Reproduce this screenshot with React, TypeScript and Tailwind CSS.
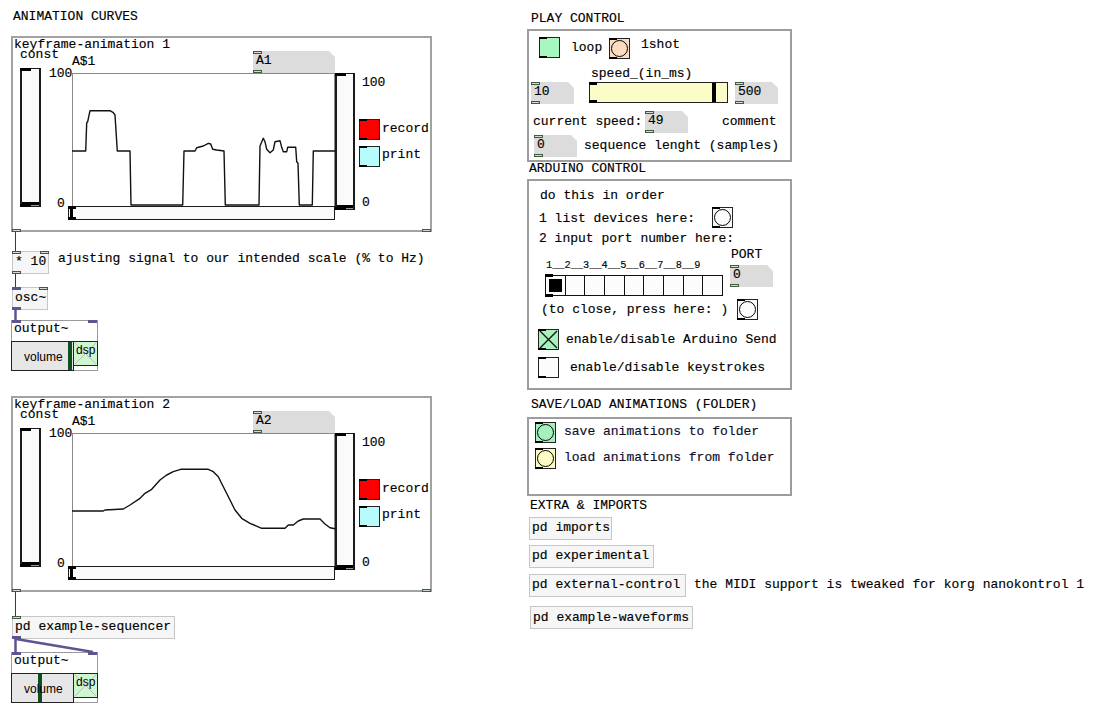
import React from "react";

type P = { c?: string; children?: React.ReactNode };

const T = ({ c = "", children }: P) => (
  <div className={`absolute whitespace-pre ${c}`}>{children}</div>
);

const Inlet = ({ c = "" }: P) => (
  <span className={`absolute h-[3px] w-[9px] border border-[#3f5a3f] bg-[#d2dcd2] ${c}`} />
);

const SigPort = ({ c = "" }: P) => (
  <span className={`absolute h-[3px] w-[9px] bg-[#5b5592] ${c}`} />
);

const Mark = ({ c = "" }: P) => <span className={`absolute h-[2px] w-[8px] bg-black ${c}`} />;

const NumBox = ({ c = "", children }: P) => (
  <div
    className={`absolute h-[22px] bg-[#dcdcdc] [clip-path:polygon(0_0,calc(100%_-_6px)_0,100%_6px,100%_100%,0_100%)] ${c}`}
  >
    <div className="absolute left-[3px] top-[1px]">{children}</div>
    <Inlet c="left-0 top-0" />
    <Inlet c="left-0 bottom-0" />
  </div>
);

const ObjBox = ({ c = "", children }: P) => (
  <div className={`absolute h-[23px] border border-[#c6c6c6] bg-[#f5f6f5] pl-[2px] pt-[1px] whitespace-pre ${c}`}>
    {children}
  </div>
);

const Toggle = ({ c = "", x = false }: P & { x?: boolean }) => (
  <div className={`absolute h-[21px] w-[21px] border border-[#222] ${c}`}>
    {x && (
      <svg className="absolute left-0 top-0" width="19" height="19" viewBox="0 0 19 19">
        <line x1="1" y1="1" x2="18" y2="18" stroke="#111" strokeWidth="1.2" />
        <line x1="18" y1="1" x2="1" y2="18" stroke="#111" strokeWidth="1.2" />
      </svg>
    )}
    <Mark c="-left-px -top-px" />
    <Mark c="-left-px -bottom-px" />
  </div>
);

const Bang = ({ c = "" }: P) => (
  <div className={`absolute h-[21px] w-[21px] border border-[#222] ${c}`}>
    <div className="absolute inset-[1px] rounded-full border border-black" />
    <Mark c="-left-px -top-px" />
    <Mark c="-left-px -bottom-px" />
  </div>
);

const VSlider = ({ c = "" }: P) => (
  <div className={`absolute border border-x-2 border-[#1a1a1a] bg-[#fafafa] ${c}`}>
    <span className="absolute -left-[2px] -top-px h-[3px] w-[11px] bg-black" />
    <span className="absolute inset-x-0 bottom-[1px] h-[3px] bg-black" />
    <span className="absolute inset-x-0 bottom-0 h-[1px] bg-[#9a9a9a]" />
    <span className="absolute -left-[2px] -bottom-px h-[3px] w-[11px] bg-black" />
  </div>
);

const HSlider = ({ c = "" }: P) => (
  <div className={`absolute border border-[#1a1a1a] bg-[#fafafa] ${c}`}>
    <span className="absolute left-[1px] inset-y-0 w-[3px] bg-black" />
    <span className="absolute -left-px -top-px h-[3px] w-[8px] bg-black" />
    <span className="absolute -left-px -bottom-px h-[3px] w-[8px] bg-black" />
  </div>
);

const curve1 =
  "0,78 13.7,78 14.7,49.7 15.7,48.7 18,37.7 38,37.7 41.3,39.7 43,42 45.3,78 58,78 59,132 110.7,132 112,78 123,78 124.7,74.7 131.3,73 136.3,70.3 138.7,71 140.7,76.3 144.7,77 152,78 153.3,132 187,132 188,73 191.3,65.3 193,68.7 194.7,76.3 198,79.7 201.3,77 203,68.7 208,67.7 209.7,74.3 211.3,78.7 214.7,78.7 215.7,74.3 223.7,74.3 224.7,88.7 226,90.3 227.3,132 240.3,132 241.3,78 263,78";

const curve2 =
  "0,78 31.3,78 33,77 51.3,76 58,72 68,65.3 73,60.3 79.7,56.3 88,47 94.7,42 101.3,38.7 108.7,36.3 136.3,36.3 141.3,38.7 146.3,43.7 151.3,53.7 158,67 163,77 169.7,85.3 178,90.3 189.7,95.3 213,95.3 216.3,92 221.3,92 226.3,88 231.3,86 248,86 253,91 258,94.7 263,95.7";

const KeyframeGOP = ({ c = "", title, num, curve }: { c?: string; title: string; num: string; curve: string }) => (
  <div className={`absolute h-[196px] w-[421px] ${c}`}>
    <div className="absolute inset-0 border-2 border-[#a2a2a2]" />
    <T c="left-[3px] top-[0px]">{title}</T>
    <T c="left-[9px] top-[10px]">const</T>
    <T c="left-[61px] top-[17px]">A$1</T>
    <div className="absolute left-[61px] top-[37px] h-[134px] w-[263px] border border-[#8a8a8a] bg-white">
      <svg className="absolute left-[-1px] top-[-1px] overflow-visible" width="263" height="134" viewBox="0 0 263 134">
        <polyline points={curve} fill="none" stroke="#111" strokeWidth="1.4" strokeLinejoin="round" />
      </svg>
    </div>
    <NumBox c="left-[242px] top-[15px] w-[82px]">{num}</NumBox>
    <VSlider c="left-[9px] top-[32px] h-[139px] w-[21px]" />
    <T c="left-[38px] top-[29px]">100</T>
    <T c="left-[46px] top-[159px]">0</T>
    <HSlider c="left-[57px] top-[170px] h-[14px] w-[267px]" />
    <VSlider c="left-[324px] top-[37px] h-[137px] w-[20px]" />
    <T c="left-[351px] top-[38px]">100</T>
    <T c="left-[351px] top-[158px]">0</T>
    <Toggle c="left-[348px] top-[83px] bg-[#fc0000]" />
    <T c="left-[371px] top-[84px]">record</T>
    <Toggle c="left-[348px] top-[110px] bg-[#b6fcfc]" />
    <T c="left-[371px] top-[110px]">print</T>
    <Inlet c="left-px bottom-0" />
    <Inlet c="right-px bottom-0" />
  </div>
);

const Output = ({ c = "", bar = "" }: { c?: string; bar?: string }) => (
  <div className={`absolute h-[51px] w-[87px] ${c}`}>
    <div className="absolute inset-0 border border-[#9a9a9a]" />
    <SigPort c="left-px top-0" />
    <SigPort c="right-px top-0" />
    <T c="left-[3px] top-0">output~</T>
    <div className="absolute left-0 top-[21px] h-[30px] w-[63px] border border-[#222] bg-[#e6e6e6] font-['Liberation_Sans',Arial,sans-serif] text-[12px] leading-[14px] [-webkit-text-stroke:0px]">
      <span className={`absolute inset-y-0 w-[4px] bg-[#0d5020] ${bar}`} />
      <span className="absolute left-[12px] top-[8px]">volume</span>
    </div>
    <div className="absolute left-[62px] top-[21px] h-[25px] w-[25px] border border-[#222] bg-[#cdf7cd] font-['Liberation_Sans',Arial,sans-serif] text-[12px] leading-[14px] [-webkit-text-stroke:0px]">
      <svg className="absolute left-0 top-0" width="23" height="23" viewBox="0 0 23 23">
        <line x1="1" y1="1" x2="22" y2="22" stroke="#bdbdbd" strokeWidth="1" />
        <line x1="22" y1="1" x2="1" y2="22" stroke="#bdbdbd" strokeWidth="1" />
      </svg>
      <span className="absolute left-[2px] top-[1px]">dsp</span>
    </div>
  </div>
);

export default function App() {
  return (
    <div className="relative h-[706px] w-[1095px] overflow-hidden bg-white font-['Liberation_Mono','Courier_New',monospace] text-[13px] leading-[18px] text-black [-webkit-text-stroke:0.15px_#000]">
      {/* LEFT COLUMN */}
      <T c="left-[13px] top-[8px]">ANIMATION CURVES</T>
      <KeyframeGOP c="left-[11px] top-[36px]" title="keyframe-animation 1" num="A1" curve={curve1} />

      <ObjBox c="left-[12px] top-[251px] w-[37px]">
        * 10
        <Inlet c="-left-px -top-px" />
        <Inlet c="-right-px -top-px" />
        <Inlet c="-left-px -bottom-px" />
      </ObjBox>
      <T c="left-[58px] top-[250px]">ajusting signal to our intended scale (% to Hz)</T>

      <ObjBox c="left-[12px] top-[287px] w-[36px]">
        osc~
        <SigPort c="-left-px -top-px" />
        <Inlet c="-right-px -top-px" />
        <SigPort c="-left-px -bottom-px" />
      </ObjBox>

      <Output c="left-[11px] top-[320px]" bar="left-[56px]" />

      <KeyframeGOP c="left-[11px] top-[396px]" title="keyframe-animation 2" num="A2" curve={curve2} />

      <ObjBox c="left-[12px] top-[616px] w-[163px]">
        pd example-sequencer
        <Inlet c="-left-px -top-px" />
        <SigPort c="-left-px -bottom-px" />
      </ObjBox>

      <Output c="left-[11px] top-[652px]" bar="left-[26px]" />

      {/* RIGHT COLUMN: PLAY CONTROL */}
      <T c="left-[531px] top-[10px]">PLAY CONTROL</T>
      <div className="absolute left-[527px] top-[29px] h-[133px] w-[265px] border-2 border-[#9d9d9d]" />
      <Toggle c="left-[539px] top-[37px] bg-[#a8f7c0]" />
      <T c="left-[571px] top-[38.5px]">loop</T>
      <Bang c="left-[609px] top-[38px] bg-[#fcdcc0]" />
      <T c="left-[641px] top-[35.5px]">1shot</T>
      <T c="left-[591px] top-[64.5px]">speed_(in_ms)</T>
      <NumBox c="left-[531px] top-[82px] w-[43px]">10</NumBox>
      <div className="absolute left-[589px] top-[82px] h-[21px] w-[139px] border border-[#222] bg-[#fcfcc8]">
        <span className="absolute left-[122px] inset-y-0 w-[4px] bg-black" />
        <Mark c="-left-px -top-px h-[3px]" />
        <Mark c="-left-px -bottom-px h-[3px]" />
      </div>
      <NumBox c="left-[735px] top-[82px] w-[43px]">500</NumBox>
      <T c="left-[533px] top-[112.5px]">current speed:</T>
      <NumBox c="left-[645px] top-[111px] w-[43px]">49</NumBox>
      <T c="left-[722px] top-[112.5px]">comment</T>
      <NumBox c="left-[534px] top-[135px] w-[43px]">0</NumBox>
      <T c="left-[584px] top-[136.5px]">sequence lenght (samples)</T>

      {/* ARDUINO CONTROL */}
      <T c="left-[529px] top-[159.5px]">ARDUINO CONTROL</T>
      <div className="absolute left-[527px] top-[179px] h-[211px] w-[265px] border-2 border-[#9d9d9d]" />
      <T c="left-[540px] top-[187px]">do this in order</T>
      <T c="left-[539px] top-[209.5px]">1 list devices here:</T>
      <Bang c="left-[712px] top-[207px] bg-[#fcfcfc]" />
      <T c="left-[539px] top-[230px]">2 input port number here:</T>
      <T c="left-[731px] top-[245.5px]">PORT</T>
      <T c="left-[546px] top-[259px] text-[10.3px] leading-[12px]">1__2__3__4__5__6__7__8__9</T>
      <div className="absolute left-[545px] top-[275px] grid h-[21px] w-[178px] grid-cols-9 gap-px border border-[#111] bg-[#111]">
        <div className="relative bg-[#fcfcfc]">
          <span className="absolute inset-[3px] bg-black" />
        </div>
        <div className="bg-[#fcfcfc]" />
        <div className="bg-[#fcfcfc]" />
        <div className="bg-[#fcfcfc]" />
        <div className="bg-[#fcfcfc]" />
        <div className="bg-[#fcfcfc]" />
        <div className="bg-[#fcfcfc]" />
        <div className="bg-[#fcfcfc]" />
        <div className="bg-[#fcfcfc]" />
      </div>
      <Mark c="left-[545px] top-[274px] h-[3px]" />
      <Mark c="left-[545px] top-[294px] h-[3px]" />
      <NumBox c="left-[730px] top-[265px] w-[43px]">0</NumBox>
      <T c="left-[541px] top-[300.5px]">(to close, press here: )</T>
      <Bang c="left-[737px] top-[299px] bg-[#fcfcfc]" />
      <Toggle c="left-[538px] top-[329px] bg-[#a8f0bc]" x />
      <T c="left-[566px] top-[331px]">enable/disable Arduino Send</T>
      <Toggle c="left-[538px] top-[357px] bg-[#fcfcfc]" />
      <T c="left-[570px] top-[358.5px]">enable/disable keystrokes</T>

      {/* SAVE / LOAD */}
      <T c="left-[531px] top-[395.5px]">SAVE/LOAD ANIMATIONS (FOLDER)</T>
      <div className="absolute left-[527px] top-[417px] h-[79px] w-[265px] border-2 border-[#9d9d9d]" />
      <Bang c="left-[535px] top-[422px] bg-[#a4f0bc]" />
      <T c="left-[564px] top-[422.5px] text-[#10103a]">save animations to folder</T>
      <Bang c="left-[535px] top-[448px] bg-[#fcfcc4]" />
      <T c="left-[564px] top-[448.5px] text-[#10103a]">load animations from folder</T>

      {/* EXTRA & IMPORTS */}
      <T c="left-[530px] top-[496.5px]">EXTRA &amp; IMPORTS</T>
      <ObjBox c="left-[529px] top-[517px] w-[83px]">pd imports</ObjBox>
      <ObjBox c="left-[529px] top-[545px] w-[125px]">pd experimental</ObjBox>
      <ObjBox c="left-[529px] top-[574px] w-[157px]">pd external-control</ObjBox>
      <T c="left-[694px] top-[576px]">the MIDI support is tweaked for korg nanokontrol 1</T>
      <ObjBox c="left-[530px] top-[606px] w-[163px] pt-[2px]">pd example-waveforms</ObjBox>

      {/* WIRES */}
      <svg className="pointer-events-none absolute left-0 top-0" width="1095" height="706" viewBox="0 0 1095 706">
        <line x1="15.5" y1="232" x2="15.5" y2="251" stroke="#3a3a3a" strokeWidth="1" />
        <line x1="15.5" y1="274" x2="15.5" y2="287" stroke="#3a3a3a" strokeWidth="1" />
        <line x1="15.5" y1="310" x2="15.5" y2="320" stroke="#5b5592" strokeWidth="2.5" />
        <line x1="15.5" y1="592" x2="15.5" y2="616" stroke="#3a3a3a" strokeWidth="1" />
        <line x1="15.5" y1="639" x2="15.5" y2="652" stroke="#5b5592" strokeWidth="2.5" />
        <line x1="16" y1="639" x2="93" y2="652" stroke="#5b5592" strokeWidth="2.5" />
      </svg>
    </div>
  );
}
